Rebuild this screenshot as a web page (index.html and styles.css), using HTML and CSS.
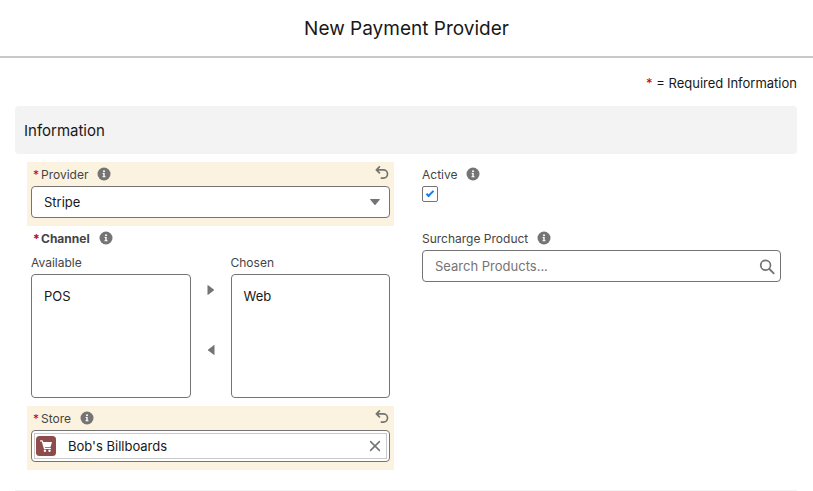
FILE: index.html
```html
<!DOCTYPE html>
<html lang="en">
<head>
    <meta charset="UTF-8">
    <meta name="viewport" content="width=device-width, initial-scale=1.0">
    <title>New Payment Provider</title>
    <link rel="stylesheet" href="styles.css">
</head>
<body>
    <!-- Shared icons -->
    <svg class="sprite" aria-hidden="true">
        <symbol id="icon-info" viewBox="0 0 14 14">
            <circle cx="7" cy="7" r="6.5" fill="#747474"/>
            <circle cx="7" cy="4.3" r="1" fill="#fff"/>
            <path d="M5.6 6.1h2.1v3.1h.8v1H5.5v-1h.8V7.1h-.7z" fill="#fff"/>
        </symbol>
        <symbol id="icon-undo" viewBox="0 0 14 14">
            <path d="M4.4.9 1.4 3.9l3 3M1.6 3.9h6.8a4.1 4.1 0 0 1 0 8.2H6.4" fill="none" stroke="#747474" stroke-width="1.7" stroke-linecap="round" stroke-linejoin="round"/>
        </symbol>
    </svg>

    <header class="modal-header">
        <h1>New Payment Provider</h1>
    </header>

    <form class="modal-body">
        <p class="required-note"><span class="required">*</span> = Required Information</p>
        <h2 class="section-title">Information</h2>

        <div class="fields">
            <div class="field edited">
                <div class="field-label">
                    <span class="required">*</span>
                    <label for="provider">Provider</label>
                    <button type="button" class="icon-button info" aria-label="Help Provider"><svg><use href="#icon-info"/></svg></button>
                    <button type="button" class="icon-button undo" aria-label="Undo Provider"><svg><use href="#icon-undo"/></svg></button>
                </div>
                <div class="control">
                    <select id="provider">
                        <option selected>Stripe</option>
                    </select>
                    <svg class="caret" viewBox="0 0 10 6"><path d="M.6 0h8.8q.8 0 .3.7L5.5 5.7q-.5.5-1 0L.3.7Q-.2 0 .6 0z" fill="#747474"/></svg>
                </div>
            </div>

            <div class="field">
                <div class="field-label">
                    <label for="active">Active</label>
                    <button type="button" class="icon-button info" aria-label="Help Active"><svg><use href="#icon-info"/></svg></button>
                </div>
                <input type="checkbox" id="active" checked>
            </div>

            <div class="field">
                <div class="field-label group-label">
                    <span class="required">*</span>
                    <span>Channel</span>
                    <button type="button" class="icon-button info" aria-label="Help Channel"><svg><use href="#icon-info"/></svg></button>
                </div>
                <div class="dueling">
                    <div class="list">
                        <label for="available">Available</label>
                        <select id="available" multiple>
                            <option>POS</option>
                        </select>
                    </div>
                    <div class="movers">
                        <button type="button" class="icon-button" aria-label="Move to Chosen"><svg viewBox="0 0 8 10"><path d="M.5.6q0-.8.7-.3l5.6 4.2q.5.5 0 1L1.2 9.7q-.7.5-.7-.3z" fill="#747474"/></svg></button>
                        <button type="button" class="icon-button" aria-label="Move to Available"><svg viewBox="0 0 8 10"><path d="M7.5.6q0-.8-.7-.3L1.2 4.5q-.5.5 0 1l5.6 4.2q.7.5.7-.3z" fill="#747474"/></svg></button>
                    </div>
                    <div class="list">
                        <label for="chosen">Chosen</label>
                        <select id="chosen" multiple>
                            <option>Web</option>
                        </select>
                    </div>
                </div>
            </div>

            <div class="field">
                <div class="field-label">
                    <label for="surcharge">Surcharge Product</label>
                    <button type="button" class="icon-button info" aria-label="Help Surcharge Product"><svg><use href="#icon-info"/></svg></button>
                </div>
                <div class="control">
                    <input type="text" id="surcharge" placeholder="Search Products...">
                    <svg class="search" viewBox="0 0 16 16"><circle cx="6.6" cy="6.2" r="4.9" fill="none" stroke="#747474" stroke-width="1.7"/><path d="m10.4 10 4.3 4.3" stroke="#747474" stroke-width="1.9" stroke-linecap="round"/></svg>
                </div>
            </div>

            <div class="field edited">
                <div class="field-label">
                    <span class="required">*</span>
                    <label for="store">Store</label>
                    <button type="button" class="icon-button info" aria-label="Help Store"><svg><use href="#icon-info"/></svg></button>
                    <button type="button" class="icon-button undo" aria-label="Undo Store"><svg><use href="#icon-undo"/></svg></button>
                </div>
                <div class="lookup">
                    <div class="pill">
                        <svg class="store-icon" viewBox="0 0 20 20">
                            <rect width="20" height="20" rx="3.5" fill="#8f4a4c"/>
                            <path d="M4.6 4.9h1.6l2.2 7.4h6.1" fill="none" stroke="#fff" stroke-width="1.3" stroke-linecap="round" stroke-linejoin="round"/>
                            <path d="M6.8 6h8.7q.6 0 .4.6l-1.2 4q-.1.4-.6.4H8.3z" fill="#fff"/>
                            <circle cx="8.9" cy="14.7" r="1.2" fill="#fff"/>
                            <circle cx="13.5" cy="14.7" r="1.2" fill="#fff"/>
                        </svg>
                        <input type="text" id="store" value="Bob's Billboards" readonly>
                        <button type="button" class="icon-button clear" aria-label="Clear Store"><svg viewBox="0 0 12 12"><path d="m1.6 1.6 8.8 8.8M10.4 1.6l-8.8 8.8" stroke="#747474" stroke-width="1.5" stroke-linecap="round"/></svg></button>
                    </div>
                </div>
            </div>
        </div>

        <hr>
    </form>
</body>
</html>
```

FILE: styles.css
```css
* {
    box-sizing: border-box;
}
body {
    margin: 0;
    background: #fff;
    color: #181818;
    font-family: Inter, "Liberation Sans", sans-serif;
    font-size: 13px;
    line-height: 20px;
}
.sprite {
    position: absolute;
    width: 0;
    height: 0;
}
.modal-header {
    padding: 17px 16px 15px;
    border-bottom: 2px solid #c9c9c9;
    text-align: center;
}
h1 {
    margin: 0;
    font-size: 19px;
    font-weight: 400;
    line-height: 24px;
}
.modal-body {
    padding: 15px 16px 0 15px;
}
.required {
    color: #ba0517;
}
.required-note {
    margin: 0 0 13px;
    text-align: right;
}
.section-title {
    margin: 0 0 8px;
    padding: 13px 9px 11px;
    border-radius: 4px;
    background: #f3f3f3;
    font-size: 15px;
    font-weight: 400;
    line-height: 24px;
}
.fields {
    display: grid;
    grid-template-columns: 1fr 1fr;
    column-gap: 24px;
    padding: 0 12px;
}
.field {
    padding: 4px 4px 8px;
}
.edited {
    background: #fbf3e0;
}
.field-label {
    display: flex;
    height: 20px;
    font-size: 12px;
    line-height: 18px;
    color: #444;
}
.field-label .required {
    width: 8px;
    margin-left: 2px;
}
.group-label {
    height: 24px;
    font-weight: 700;
}
.icon-button {
    display: flex;
    padding: 0;
    border: none;
    background: none;
    cursor: pointer;
}
.info {
    margin: 1px 0 0 9px;
}
.undo {
    margin: 0 1px 0 auto;
}
.field-label svg {
    width: 14px;
    height: 14px;
}
.control {
    position: relative;
}
select,
input {
    margin: 0;
    font: inherit;
    color: #181818;
}
.control select,
.control input {
    display: block;
    width: 100%;
    height: 32px;
    padding: 0 36px 0 12px;
    border: 1px solid #747474;
    border-radius: 4px;
    background: #fff;
    appearance: none;
}
.control input::placeholder {
    color: #747474;
}
.caret {
    position: absolute;
    top: 13px;
    right: 10px;
    width: 10px;
    height: 6px;
}
.search {
    position: absolute;
    top: 9px;
    right: 6px;
    width: 16px;
    height: 16px;
}
input[type="checkbox"] {
    display: grid;
    place-items: center;
    width: 16px;
    height: 16px;
    border: 1px solid #747474;
    border-radius: 2px;
    background: #fff;
    appearance: none;
}
input[type="checkbox"]:checked::before {
    content: "";
    width: 6px;
    height: 2px;
    margin-bottom: 2px;
    border: solid #1b7be0;
    border-width: 0 0 2px 2px;
    transform: rotate(-45deg);
}
.dueling {
    display: flex;
}
.list {
    flex: 1;
    min-width: 0;
}
.list label {
    display: block;
    margin-bottom: 2px;
    font-size: 12px;
    line-height: 18px;
    color: #444;
}
.list select {
    display: block;
    width: 100%;
    height: 124px;
    padding: 5px 0;
    border: 1px solid #747474;
    border-radius: 4px;
    background: #fff;
    appearance: none;
    overflow: auto;
}
.list option {
    padding: 8px 12px;
}
.movers {
    display: flex;
    flex-direction: column;
    gap: 50px;
    width: 40px;
    padding-top: 31px;
    align-items: center;
}
.movers svg {
    width: 8px;
    height: 10px;
}
.lookup {
    height: 32px;
    padding: 2px;
    border: 1px solid #747474;
    border-radius: 4px;
    background: #fff;
}
.pill {
    display: flex;
    align-items: center;
    height: 100%;
    padding: 0 5px 0 1px;
    border: 1px solid #c9c9c9;
}
.store-icon {
    flex: none;
    width: 20px;
    height: 20px;
}
.pill input {
    flex: 1;
    min-width: 0;
    padding: 0 12px;
    border: none;
    background: none;
    outline: none;
}
.clear svg {
    width: 12px;
    height: 12px;
}
hr {
    margin: 20px 0 0;
    border: none;
    border-top: 1px solid #f3f3f3;
}
```
